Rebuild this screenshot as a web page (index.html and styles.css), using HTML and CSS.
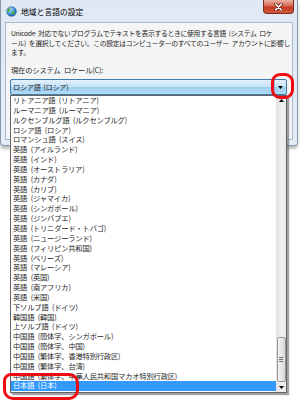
FILE: index.html
```html
<!DOCTYPE html>
<html lang="ja">
<head>
    <meta charset="UTF-8">
    <meta name="viewport" content="width=device-width, initial-scale=1.0">
    <title>地域と言語の設定</title>
    <link rel="stylesheet" href="styles.css">
</head>
<body>
    <div class="window">
        <div class="titlebar">
            <svg class="app-icon" width="11" height="11" viewBox="0 0 11 11">
                <defs>
                    <radialGradient id="sea" cx="0.35" cy="0.3" r="0.8">
                        <stop offset="0" stop-color="#bfe6ff"/>
                        <stop offset="0.6" stop-color="#3c8fd8"/>
                        <stop offset="1" stop-color="#1a4f9a"/>
                    </radialGradient>
                </defs>
                <circle cx="5.5" cy="5.5" r="4.8" fill="url(#sea)" stroke="#1d4f8c" stroke-width="0.6"/>
                <path d="M3 2.6 C4.3 2.2 5 3 4.6 4 C4.2 4.8 3.2 4.6 2.8 5.6 C2.4 6.4 1.6 5.6 1.5 4.6 C1.6 3.6 2.2 2.9 3 2.6 Z" fill="#4caf3c"/>
                <path d="M6.4 5.2 C7.6 4.9 8.8 5.5 8.6 6.8 C8.4 8 7.2 8.9 6.3 8.5 C5.7 7.8 6 6.8 5.8 6.2 C5.7 5.7 6 5.3 6.4 5.2 Z" fill="#4caf3c"/>
            </svg>
            <span class="title">地域と言語の設定</span>
            <div class="close">
                <svg width="9" height="8" viewBox="0 0 9 8">
                    <path d="M1.5 1 L7.5 7 M7.5 1 L1.5 7" stroke="#5a1a10" stroke-width="3" stroke-linecap="round"/>
                    <path d="M1.5 1 L7.5 7 M7.5 1 L1.5 7" stroke="#fff" stroke-width="1.6" stroke-linecap="round"/>
                </svg>
            </div>
        </div>
        <div class="panel">
            <p class="desc">Unicode 対応でないプログラムでテキストを表示するときに使用する言語 (システム ロケ<br>ール) を選択してください。この設定はコンピューターのすべてのユーザー アカウントに影響し<br>ます。</p>
            <label class="label">現在のシステム ロケール(C):</label>
            <div class="combo">
                <div class="combo-value">ロシア語 (ロシア)</div>
                <div class="combo-btn">
                    <svg width="5" height="3" viewBox="0 0 5 3"><path d="M0 0 H5 L2.5 3 Z" fill="#000"/></svg>
                </div>
                <div class="dropdown">
                    <ul class="options">
                        <li>リトアニア語 (リトアニア)</li>
                        <li>ルーマニア語 (ルーマニア)</li>
                        <li>ルクセンブルグ語 (ルクセンブルグ)</li>
                        <li>ロシア語 (ロシア)</li>
                        <li>ロマンシュ語 (スイス)</li>
                        <li>英語 (アイルランド)</li>
                        <li>英語 (インド)</li>
                        <li>英語 (オーストラリア)</li>
                        <li>英語 (カナダ)</li>
                        <li>英語 (カリブ)</li>
                        <li>英語 (ジャマイカ)</li>
                        <li>英語 (シンガポール)</li>
                        <li>英語 (ジンバブエ)</li>
                        <li>英語 (トリニダード・トバゴ)</li>
                        <li>英語 (ニュージーランド)</li>
                        <li>英語 (フィリピン共和国)</li>
                        <li>英語 (ベリーズ)</li>
                        <li>英語 (マレーシア)</li>
                        <li>英語 (英国)</li>
                        <li>英語 (南アフリカ)</li>
                        <li>英語 (米国)</li>
                        <li>下ソルブ語 (ドイツ)</li>
                        <li>韓国語 (韓国)</li>
                        <li>上ソルブ語 (ドイツ)</li>
                        <li>中国語 (簡体字、シンガポール)</li>
                        <li>中国語 (簡体字、中国)</li>
                        <li>中国語 (繁体字、香港特別行政区)</li>
                        <li>中国語 (繁体字、台湾)</li>
                        <li>中国語 (繁体字、中華人民共和国マカオ特別行政区)</li>
                        <li class="selected">日本語 (日本)</li>
                    </ul>
                    <div class="scrollbar">
                        <div class="sb-arrow">
                            <svg width="5" height="3" viewBox="0 0 5 3"><path d="M0 3 H5 L2.5 0 Z" fill="#000"/></svg>
                        </div>
                        <div class="sb-track">
                            <div class="sb-thumb">
                                <span class="grip"></span>
                            </div>
                        </div>
                        <div class="sb-arrow">
                            <svg width="5" height="3" viewBox="0 0 5 3"><path d="M0 0 H5 L2.5 3 Z" fill="#000"/></svg>
                        </div>
                    </div>
                </div>
            </div>
        </div>
    </div>

    <div class="mark mark-arrow"></div>
    <div class="mark mark-item"></div>
</body>
</html>
```

FILE: styles.css
```css
body {
    margin: 0;
    background-color: #fff;
    font-family: "Noto Sans CJK JP", "Noto Sans", sans-serif;
    color: #1e1e1e;
    width: 302px;
    height: 400px;
    overflow: hidden;
    position: relative;
}
.window {
    width: 298px;
    height: 146px;
    box-sizing: border-box;
    padding: 0 4px 5px 4px;
    background: linear-gradient(#dfe8f3, #e6edf6);
    border: 1px solid #8497ad;
    border-top: none;
    border-radius: 0 0 4px 4px;
    box-shadow: 0 3px 3px rgba(0, 0, 0, 0.25);
    display: flex;
    flex-direction: column;
}
.titlebar {
    height: 22px;
    display: flex;
    align-items: center;
    position: relative;
}
.app-icon {
    margin: 0 4px 0 1px;
}
.title {
    font-size: 7.8px;
    color: #000;
}
.close {
    position: absolute;
    top: 0;
    right: -1px;
    width: 31px;
    height: 14px;
    box-sizing: border-box;
    border: 1px solid #7a2d22;
    border-top: none;
    border-radius: 0 0 4px 4px;
    background: linear-gradient(#eab0a3, #d66a53 45%, #c53b22 55%, #d4593c);
    display: flex;
    align-items: center;
    justify-content: center;
}
.panel {
    flex: 1;
    background-color: #f5f5f5;
    border: 1px solid #a7bbd2;
    padding: 6px 5px 0 4px;
}
.desc {
    margin: 0 0 0 1px;
    font-size: 6.8px;
    line-height: 9.5px;
    letter-spacing: -0.3px;
    word-spacing: 1.5px;
    white-space: nowrap;
}
.label {
    display: block;
    margin: 8.5px 0 0 1px;
    font-size: 7.3px;
    line-height: 9.5px;
    letter-spacing: -0.2px;
    word-spacing: 2px;
}
.combo {
    margin-top: 3.5px;
    height: 16px;
    box-sizing: border-box;
    border: 1px solid #3d7bad;
    border-radius: 2px;
    background: linear-gradient(#e3f1fc, #c4e2f7 50%, #9fcfef 52%, #b3dbf4);
    display: flex;
    position: relative;
}
.combo-value {
    flex: 1;
    font-size: 7.2px;
    line-height: 14px;
    padding-left: 2px;
    letter-spacing: -0.3px;
    word-spacing: 1.5px;
}
.combo-btn {
    width: 11px;
    border-left: 1px solid #8fbfe0;
    display: flex;
    align-items: center;
    justify-content: center;
}
.dropdown {
    position: absolute;
    top: 15px;
    left: -1px;
    right: -1px;
    height: 298px;
    box-sizing: border-box;
    border: 1px solid #646464;
    background-color: #fff;
    box-shadow: 2px 2px 1px rgba(70, 70, 80, 0.5);
    display: flex;
}
.options {
    flex: 1;
    list-style: none;
    margin: 0;
    padding: 0;
}
.options li {
    height: 9.85px;
    line-height: 9.85px;
    font-size: 7.3px;
    padding-left: 2px;
    letter-spacing: -0.2px;
    word-spacing: 2px;
    white-space: nowrap;
    overflow: hidden;
}
.options li.selected {
    background-color: #3399ff;
    color: #fff;
}
.scrollbar {
    width: 10px;
    background: linear-gradient(90deg, #e2e2e2, #f0f0f0 60%, #e9e9e9);
    display: flex;
    flex-direction: column;
}
.sb-arrow {
    height: 9px;
    display: flex;
    align-items: center;
    justify-content: center;
}
.sb-track {
    flex: 1;
    display: flex;
    flex-direction: column;
    justify-content: flex-end;
    padding-bottom: 1px;
}
.sb-thumb {
    height: 45px;
    margin: 0 0.5px;
    box-sizing: border-box;
    border: 1px solid #979797;
    border-radius: 2px;
    background: linear-gradient(90deg, #f4f4f4, #e6e6e6 50%, #d8d8d8);
    display: flex;
    align-items: center;
    justify-content: center;
}
.grip {
    width: 4px;
    height: 5px;
    background: repeating-linear-gradient(#6e6e6e 0 1px, transparent 1px 2px);
}
.mark {
    position: absolute;
    border: 3px solid #ee0b12;
    box-sizing: border-box;
}
.mark-arrow {
    left: 271px;
    top: 73px;
    width: 23px;
    height: 26px;
    border-radius: 9px;
}
.mark-item {
    left: 3px;
    top: 373px;
    width: 76px;
    height: 27px;
    border-radius: 8px 10px 10px 10px;
}
```
